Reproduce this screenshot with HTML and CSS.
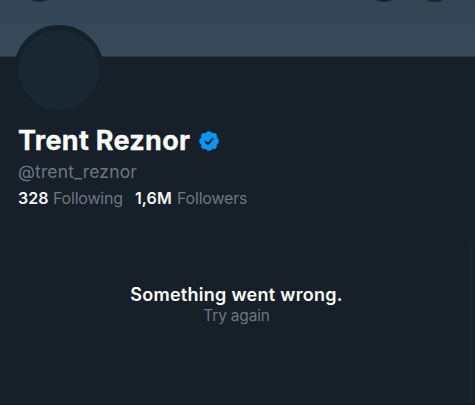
FILE: index.html
```html
<!DOCTYPE html>
<html lang="en">
<head>
<meta charset="utf-8">
<title>Trent Reznor</title>
<link rel="stylesheet" href="styles.css">
</head>
<body>
<main class="profile">
  <header class="banner">
    <span class="round-button back"></span>
    <span class="round-button search"></span>
    <span class="round-button more"></span>
  </header>
  <div class="avatar"></div>
  <section class="details">
    <div class="name-row">
      <h1 class="name">Trent Reznor</h1>
      <svg class="verified" viewBox="0 0 20 20">
        <g fill="#0896f5"><circle cx="10" cy="10" r="8"/><circle cx="10" cy="3.4" r="3.2"/><circle cx="14.7" cy="5.3" r="3.2"/><circle cx="16.6" cy="10" r="3.2"/><circle cx="14.7" cy="14.7" r="3.2"/><circle cx="10" cy="16.6" r="3.2"/><circle cx="5.3" cy="14.7" r="3.2"/><circle cx="3.4" cy="10" r="3.2"/><circle cx="5.3" cy="5.3" r="3.2"/></g>
        <path d="M6 10.2 9 13.1 14.1 7.2" fill="none" stroke="#17202a" stroke-width="2"/>
      </svg>
    </div>
    <div class="handle">@trent_reznor</div>
    <div class="stats">
      <span class="stat"><b class="n1">328</b><span class="following">Following</span></span>
      <span class="stat"><b class="n2">1,6M</b><span class="followers">Followers</span></span>
    </div>
  </section>
  <section class="error">
    <div class="message">Something went wrong.</div>
    <div class="retry">Try again</div>
  </section>
  <div class="scrollbar"></div>
</main>
</body>
</html>
```
FILE: styles.css
```css
* { box-sizing: border-box; }
body { margin: 0; background: #171f28; font-family: Inter, "Liberation Sans", sans-serif; }
.profile { position: relative; height: 405px; overflow: hidden; border-bottom: 1px solid #101820; }
.banner { position: relative; height: 57px; background: linear-gradient(#354453, #384b5b); border-bottom: 1px solid #293a46; }
.round-button { position: absolute; top: -32px; width: 34px; height: 34px; border-radius: 50%; background: #1c252c; }
.back { left: 22px; }
.search { left: 367px; }
.more { left: 418px; }
.avatar { position: relative; width: 90px; height: 90px; margin: -32px 0 0 14px; border: 5px solid #15212a; border-radius: 50%; background: #1b2633; }
.details { padding: 9px 18px 0; white-space: nowrap; }
.name-row { display: flex; align-items: center; gap: 9px; height: 34px; }
.name { width: 172px; margin: 0; font-size: 27px; font-weight: 700; line-height: 34px; letter-spacing: 0.3px; color: #fff; -webkit-text-stroke: 0.3px #fff; }
.verified { width: 20px; height: 20px; margin-top: -1px; }
.handle { height: 26px; margin-top: 1px; font-size: 17.5px; line-height: 26px; letter-spacing: 0.15px; color: #6b7785; }
.stats { display: flex; gap: 12px; height: 24px; margin-top: 1px; font-size: 16px; line-height: 24px; letter-spacing: -0.2px; color: #6b7785; }
.stat { display: flex; gap: 5px; }
.stat b { font-weight: 600; letter-spacing: 0.1px; color: #f5f7f8; }
.n1 { width: 30px; }
.following { width: 70px; }
.n2 { width: 37px; }
.error { margin-top: 73px; padding-right: 2px; text-align: center; white-space: nowrap; }
.message { height: 24px; font-size: 18px; font-weight: 600; line-height: 24px; letter-spacing: 0.28px; color: #fff; }
.retry { height: 20px; margin-top: -1px; font-size: 15.5px; line-height: 20px; letter-spacing: -0.2px; color: #6b7785; }
.scrollbar { position: absolute; top: 243px; right: 2px; width: 4px; height: 160px; border-radius: 2px; background: #1c252e; }
```
